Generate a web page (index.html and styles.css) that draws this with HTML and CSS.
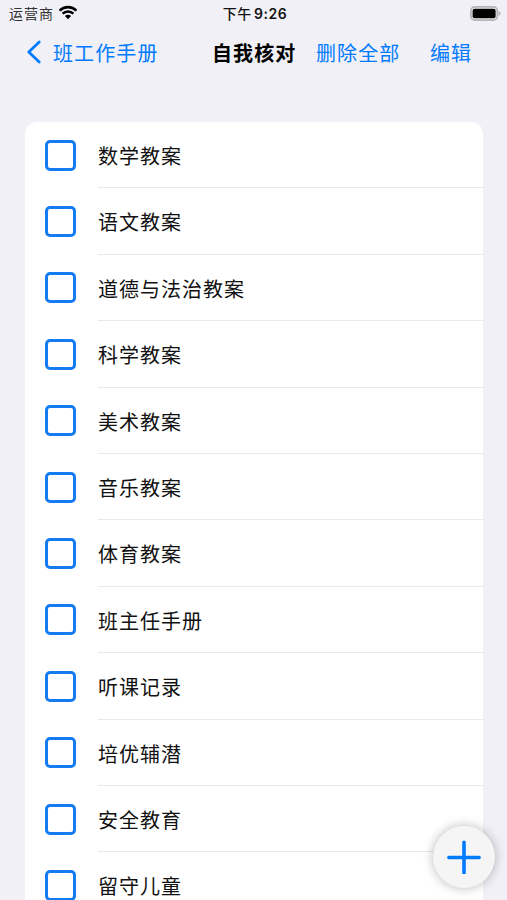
FILE: index.html
```html
<!DOCTYPE html>
<html lang="zh-CN">
<head>
    <meta charset="UTF-8">
    <meta name="viewport" content="width=device-width, initial-scale=1.0">
    <title>自我核对</title>
    <link rel="stylesheet" href="styles.css">
</head>
<body>
    <div class="screen">
        <div class="status-bar">
            <div class="carrier">
                <span>运营商</span>
                <svg class="wifi" width="20" height="15" viewBox="0 0 20 15">
                    <path d="M1.6 5.6 A12 12 0 0 1 18.4 5.6" fill="none" stroke="#000" stroke-width="2.6"/>
                    <path d="M4.6 8.7 A7.7 7.7 0 0 1 15.4 8.7" fill="none" stroke="#000" stroke-width="2.4"/>
                    <path d="M10 14.2 L6.9 11.1 A4.4 4.4 0 0 1 13.1 11.1 Z" fill="#000"/>
                </svg>
            </div>
            <span class="time">下午 <b>9:26</b></span>
            <svg class="battery" width="31" height="15" viewBox="0 0 31 15">
                <rect x="0.9" y="0.9" width="26.4" height="13.2" rx="4" fill="none" stroke="#b4b4b6" stroke-width="1.8"/>
                <rect x="2.6" y="2.7" width="23" height="9.6" rx="2" fill="#000"/>
                <path d="M28.6 5 Q30.6 5.6 30.6 7.5 Q30.6 9.4 28.6 10 Z" fill="#b4b4b6"/>
            </svg>
        </div>

        <div class="nav-bar">
            <a class="back">
                <svg width="15" height="24" viewBox="0 0 15 24">
                    <path d="M13.2 2 L2.8 12 L13.2 22" fill="none" stroke="#007aff" stroke-width="2.7" stroke-linecap="round" stroke-linejoin="round"/>
                </svg>
                <span>班工作手册</span>
            </a>
            <span class="title">自我核对</span>
            <a class="delete">删除全部</a>
            <a class="edit">编辑</a>
        </div>

        <ul class="list">
            <li><span class="checkbox"></span><span class="label">数学教案</span></li>
            <li><span class="checkbox"></span><span class="label">语文教案</span></li>
            <li><span class="checkbox"></span><span class="label">道德与法治教案</span></li>
            <li><span class="checkbox"></span><span class="label">科学教案</span></li>
            <li><span class="checkbox"></span><span class="label">美术教案</span></li>
            <li><span class="checkbox"></span><span class="label">音乐教案</span></li>
            <li><span class="checkbox"></span><span class="label">体育教案</span></li>
            <li><span class="checkbox"></span><span class="label">班主任手册</span></li>
            <li><span class="checkbox"></span><span class="label">听课记录</span></li>
            <li><span class="checkbox"></span><span class="label">培优辅潜</span></li>
            <li><span class="checkbox"></span><span class="label">安全教育</span></li>
            <li><span class="checkbox"></span><span class="label">留守儿童</span></li>
        </ul>

        <button class="add" type="button" aria-label="添加">
            <svg width="34" height="34" viewBox="0 0 34 34">
                <path d="M17 2.2 V32.8 M1.9 17.5 H32.1" stroke="#007aff" stroke-width="3.6" stroke-linecap="round"/>
            </svg>
        </button>
    </div>
</body>
</html>
```

FILE: styles.css
```css
body {
    margin: 0;
    background-color: #f1f0f6;
    color: #111;
    font-family: Inter, "Noto Sans CJK SC", sans-serif;
}
.screen {
    position: relative;
    height: 900px;
    overflow: hidden;
}
.status-bar {
    display: grid;
    grid-template-columns: 1fr auto 1fr;
    align-items: center;
    height: 27px;
    padding: 0 6px 0 9px;
    font-size: 14px;
    line-height: 27px;
}
.carrier {
    display: flex;
    align-items: center;
    gap: 4px;
    color: #333;
    letter-spacing: 1px;
}
.wifi {
    margin-top: -2px;
}
.time {
    font-weight: 500;
    letter-spacing: 0.5px;
}
.time b {
    font-weight: 600;
    margin-left: -2px;
}
.battery {
    justify-self: end;
    margin-top: -1px;
}
.nav-bar {
    display: flex;
    align-items: center;
    height: 50px;
    padding-left: 26px;
    font-size: 20px;
    line-height: 50px;
    letter-spacing: 1.1px;
    white-space: nowrap;
}
.nav-bar a {
    color: #007aff;
}
.nav-bar span,
.delete,
.edit {
    padding-top: 3px;
}
.back {
    display: flex;
    align-items: center;
    gap: 12px;
    width: 186px;
}
.title {
    width: 104px;
    color: #000;
    font-weight: 700;
}
.delete {
    width: 114px;
}
.list {
    margin: 45px 24px 0 25px;
    padding: 0;
    list-style: none;
    background-color: #fff;
    border-radius: 12px 12px 0 0;
}
.list li {
    display: flex;
    height: 66.4px;
    padding-left: 19.5px;
    align-items: center;
}
.checkbox {
    box-sizing: border-box;
    width: 31px;
    height: 31px;
    margin-right: 22.5px;
    border: 3px solid #147cf0;
    border-radius: 5px;
}
.label {
    flex: 1;
    box-sizing: border-box;
    height: 66.4px;
    border-bottom: 1px solid #e9e9eb;
    font-size: 20px;
    line-height: 70px;
    letter-spacing: 1px;
}
.add {
    position: absolute;
    left: 433px;
    top: 826px;
    display: flex;
    align-items: center;
    justify-content: center;
    width: 62px;
    height: 62px;
    padding: 0;
    border: none;
    border-radius: 50%;
    background-color: #f5f5f5;
    box-shadow: 0 0 11px rgba(0, 0, 0, 0.28);
}
```
